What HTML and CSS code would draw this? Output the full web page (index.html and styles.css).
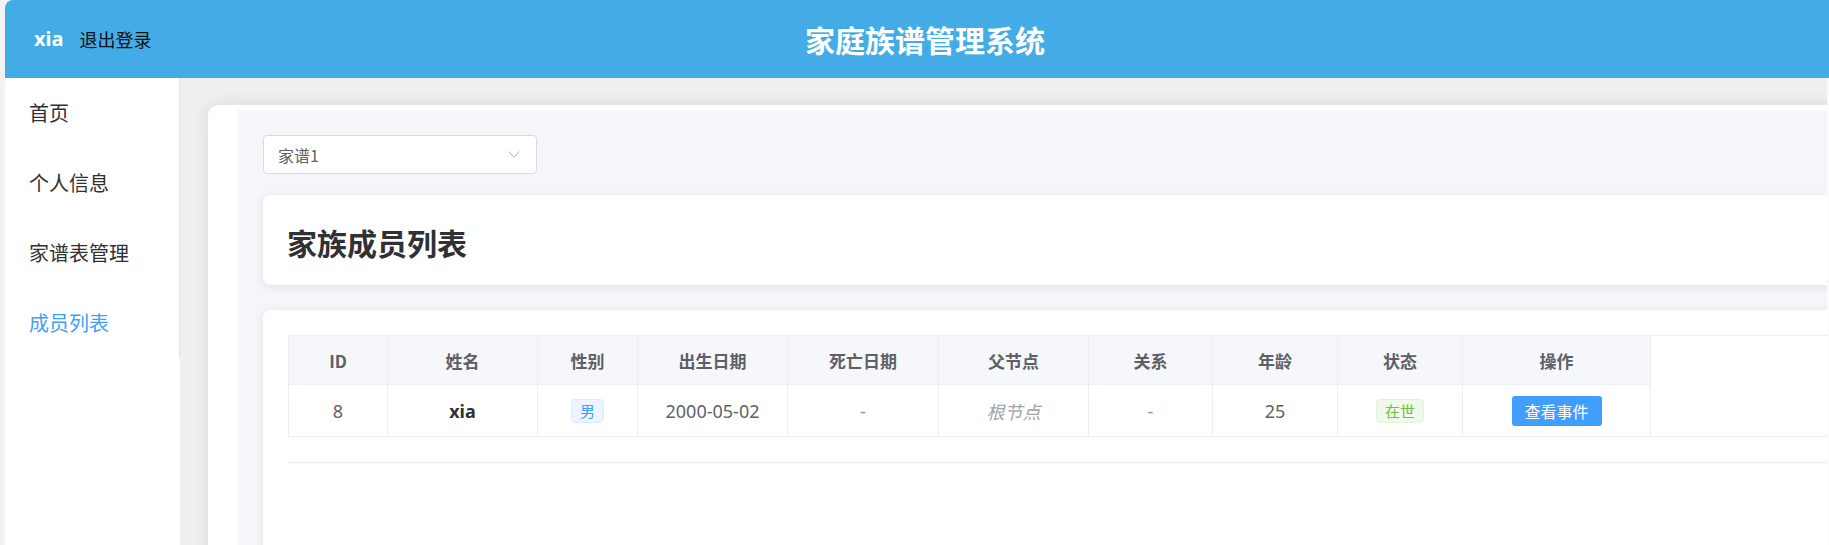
FILE: index.html
```html
<!DOCTYPE html>
<html lang="zh-CN">
<head>
<meta charset="utf-8">
<title>家庭族谱管理系统</title>
<link rel="stylesheet" href="styles.css">
</head>
<body>
<div class="app">
  <header class="topbar">
    <div class="user">
      <span class="username">xia</span>
      <a class="logout">退出登录</a>
    </div>
    <h1 class="sys-title">家庭族谱管理系统</h1>
    <div class="topbar-spacer"></div>
  </header>
  <div class="layout">
    <aside class="sidebar">
      <ul class="menu">
        <li class="menu-item">首页</li>
        <li class="menu-item">个人信息</li>
        <li class="menu-item">家谱表管理</li>
        <li class="menu-item active">成员列表</li>
      </ul>
    </aside>
    <main class="main">
      <div class="panel">
        <div class="content">
          <div class="select">
            <span class="select-value">家谱1</span>
            <svg class="select-arrow" width="12" height="7" viewBox="0 0 12 7"><polyline points="0.5,0.5 6,6 11.5,0.5" fill="none" stroke="#b4b8c0" stroke-width="1"/></svg>
          </div>
          <div class="card title-card"><h2 class="page-title">家族成员列表</h2></div>
          <div class="card table-card">
            <div class="table">
              <div class="thead">
                <div class="th c-id">ID</div>
                <div class="th c-name">姓名</div>
                <div class="th c-gender">性别</div>
                <div class="th c-birth">出生日期</div>
                <div class="th c-death">死亡日期</div>
                <div class="th c-parent">父节点</div>
                <div class="th c-rel">关系</div>
                <div class="th c-age">年龄</div>
                <div class="th c-status">状态</div>
                <div class="th c-op">操作</div>
              </div>
              <div class="trow">
                <div class="td c-id">8</div>
                <div class="td c-name"><strong class="name">xia</strong></div>
                <div class="td c-gender"><span class="tag tag-male">男</span></div>
                <div class="td c-birth">2000-05-02</div>
                <div class="td c-death muted">-</div>
                <div class="td c-parent"><em class="root">根节点</em></div>
                <div class="td c-rel muted">-</div>
                <div class="td c-age">25</div>
                <div class="td c-status"><span class="tag tag-alive">在世</span></div>
                <div class="td c-op"><button class="btn">查看事件</button></div>
              </div>
            </div>
            <div class="table-foot"></div>
          </div>
        </div>
      </div>
    </main>
  </div>
</div>
</body>
</html>
```

FILE: styles.css
```css
* {
  box-sizing: border-box;
}

html, body {
  margin: 0;
  padding: 0;
  height: 545px;
  overflow: hidden;
}

body {
  background: linear-gradient(to right, #f2f2f3 5px, #fbfbfb 5px);
  font-family: "Noto Sans", "Noto Sans CJK SC", sans-serif;
  color: #303133;
}

.app {
  margin-left: 5px;
  height: 545px;
  display: flex;
  flex-direction: column;
}

/* ---------- top bar ---------- */
.topbar {
  height: 78px;
  flex: none;
  background: #43ace6;
  border-top-left-radius: 8px;
  display: grid;
  grid-template-columns: 1fr auto 1fr;
  align-items: center;
}

.user {
  display: flex;
  align-items: center;
  gap: 16px;
  padding-left: 29px;
}

.username {
  color: #fff;
  font-weight: 700;
  font-size: 20px;
  line-height: 24px;
}

.logout {
  color: #111;
  font-size: 18px;
  line-height: 24px;
  font-family: "Noto Sans CJK SC", sans-serif;
}

.sys-title {
  margin: 0;
  padding-left: 16px;
  color: #fff;
  font-size: 30px;
  line-height: 40px;
  font-weight: 700;
  font-family: "Noto Sans CJK SC", sans-serif;
}

/* ---------- layout ---------- */
.layout {
  flex: 1;
  display: flex;
  margin-right: 2px;
  min-height: 0;
}

.sidebar {
  width: 175px;
  flex: none;
  background: #fff;
}

.menu {
  list-style: none;
  margin: 0;
  padding: 0;
  border-right: 1px solid #e4e4e6;
}

.menu-item {
  height: 70px;
  line-height: 70px;
  padding-left: 24px;
  font-size: 20px;
  color: #303133;
  font-family: "Noto Sans CJK SC", sans-serif;
}

.menu-item.active {
  color: #409eff;
}

.main {
  flex: 1;
  min-width: 0;
  background: #f0efed;
  padding: 27px 0 0 28px;
  overflow: hidden;
}

.panel {
  background: #fff;
  border-top-left-radius: 10px;
  padding: 5px 0 0 30px;
  margin-right: -80px;
  height: 700px;
  box-shadow: 0 0 18px rgba(0, 0, 0, 0.09);
}

.content {
  background: #f5f6fa;
  padding: 25px 0 25px 25px;
  height: 100%;
}

/* ---------- select ---------- */
.select {
  width: 274px;
  height: 39px;
  background: #fff;
  border: 1px solid #d9dbe1;
  border-radius: 4px;
  display: flex;
  align-items: center;
  justify-content: space-between;
  padding: 0 16px 0 14px;
}

.select-value {
  font-size: 16px;
  color: #606266;
  font-family: "Noto Sans CJK SC", sans-serif;
}

.select-arrow {
  display: block;
}

/* ---------- cards ---------- */
.card {
  background: #fff;
  border-radius: 8px;
  box-shadow: 0 2px 10px rgba(0, 0, 0, 0.09);
}

.title-card {
  margin-top: 21px;
  height: 90px;
  display: flex;
  align-items: center;
  padding-left: 24px;
}

.page-title {
  margin: 0;
  font-size: 30px;
  line-height: 40px;
  font-weight: 700;
  color: #303133;
  font-family: "Noto Sans CJK SC", sans-serif;
  padding-top: 4px;
}

.table-card {
  margin-top: 25px;
  padding: 25px 0 25px 25px;
  height: 300px;
}

/* ---------- table ---------- */
.table {
  border-top: 1px solid #ebeef5;
}

.thead,
.trow {
  display: flex;
}

.trow {
  border-bottom: 1px solid #ebeef5;
}

.th,
.td {
  flex: none;
  display: flex;
  align-items: center;
  justify-content: center;
  border-right: 1px solid #ebeef5;
}

.c-id {
  border-left: 1px solid #ebeef5;
}

.th {
  height: 49px;
  background: #f5f7fa;
  border-bottom: 1px solid #ebeef5;
  font-weight: 700;
  font-size: 17px;
  color: #5e6066;
  font-family: "Noto Sans CJK SC", sans-serif;
}

.td {
  height: 51px;
  font-size: 18px;
  color: #606266;
}

.c-id { width: 100px; }
.c-name { width: 150px; }
.c-gender { width: 100px; }
.c-birth { width: 150px; }
.c-death { width: 151px; }
.c-parent { width: 150px; }
.c-rel { width: 124px; }
.c-age { width: 125px; }
.c-status { width: 125px; }
.c-op { width: 188px; }

.name {
  font-weight: 700;
  color: #303133;
}

.muted {
  color: #909399;
}

.root {
  font-style: italic;
  color: #a0a3a8;
  font-family: "Noto Sans CJK SC", sans-serif;
}

.tag {
  display: inline-block;
  height: 24px;
  line-height: 22px;
  padding: 0 8px;
  font-size: 15px;
  border-radius: 4px;
  border: 1px solid;
  font-family: "Noto Sans CJK SC", sans-serif;
}

.tag-male {
  background: #ecf5ff;
  border-color: #d9ecff;
  color: #409eff;
}

.tag-alive {
  background: #f0f9eb;
  border-color: #e1f3d8;
  color: #67c23a;
}

.btn {
  width: 90px;
  height: 30px;
  border: none;
  border-radius: 3px;
  background: #409eff;
  color: #fff;
  font-size: 16px;
  font-family: "Noto Sans CJK SC", sans-serif;
  padding: 0;
}

.table-foot {
  margin-top: 25px;
  border-top: 1px solid #ebeef5;
}
```
